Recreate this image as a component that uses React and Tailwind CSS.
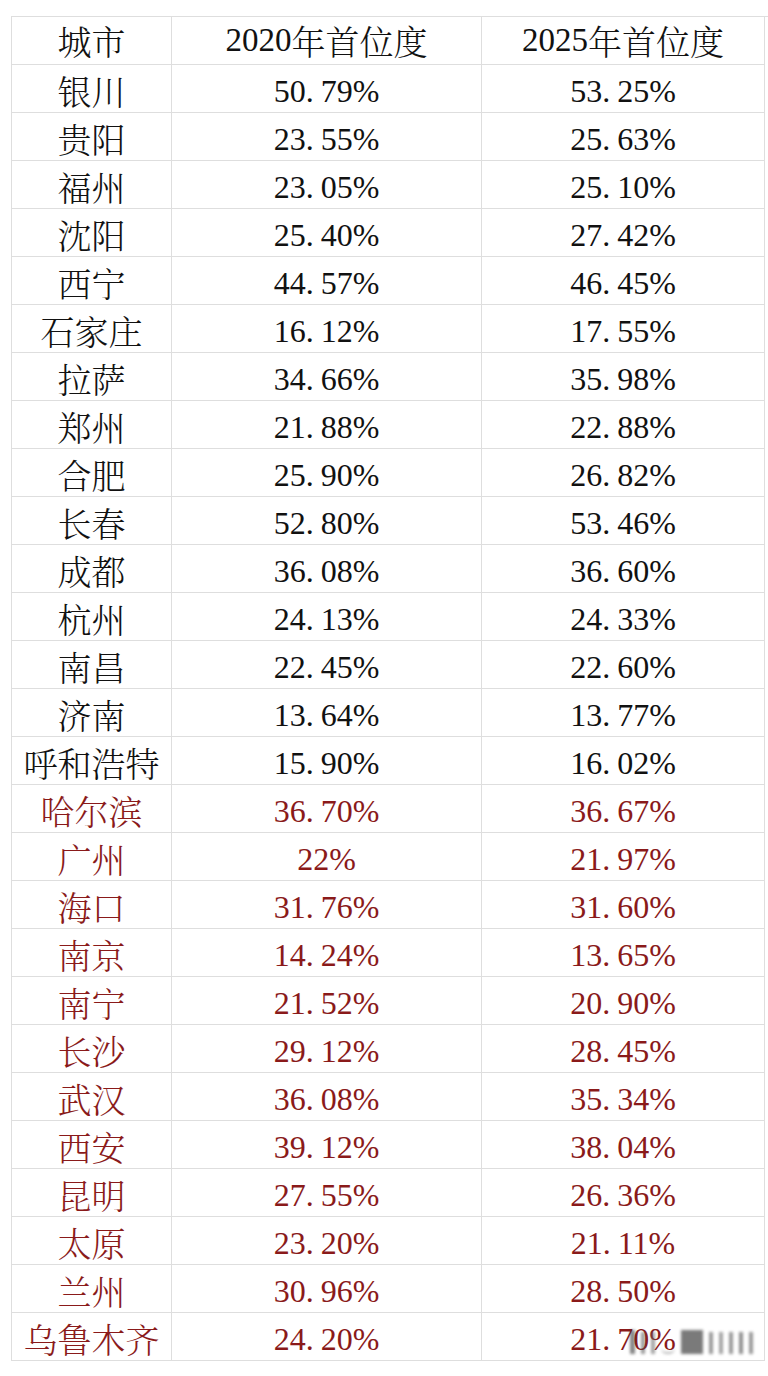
import React from "react";

const rows = [
  ["银川", "50.79%", "53.25%", 0],
  ["贵阳", "23.55%", "25.63%", 0],
  ["福州", "23.05%", "25.10%", 0],
  ["沈阳", "25.40%", "27.42%", 0],
  ["西宁", "44.57%", "46.45%", 0],
  ["石家庄", "16.12%", "17.55%", 0],
  ["拉萨", "34.66%", "35.98%", 0],
  ["郑州", "21.88%", "22.88%", 0],
  ["合肥", "25.90%", "26.82%", 0],
  ["长春", "52.80%", "53.46%", 0],
  ["成都", "36.08%", "36.60%", 0],
  ["杭州", "24.13%", "24.33%", 0],
  ["南昌", "22.45%", "22.60%", 0],
  ["济南", "13.64%", "13.77%", 0],
  ["呼和浩特", "15.90%", "16.02%", 0],
  ["哈尔滨", "36.70%", "36.67%", 1],
  ["广州", "22%", "21.97%", 1],
  ["海口", "31.76%", "31.60%", 1],
  ["南京", "14.24%", "13.65%", 1],
  ["南宁", "21.52%", "20.90%", 1],
  ["长沙", "29.12%", "28.45%", 1],
  ["武汉", "36.08%", "35.34%", 1],
  ["西安", "39.12%", "38.04%", 1],
  ["昆明", "27.55%", "26.36%", 1],
  ["太原", "23.20%", "21.11%", 1],
  ["兰州", "30.96%", "28.50%", 1],
  ["乌鲁木齐", "24.20%", "21.70%", 1],
];

function Num({ v }) {
  const i = v.indexOf(".");
  if (i < 0) return <span>{v}</span>;
  return (
    <span>
      {v.slice(0, i)}
      <span className="mr-[7px]">.</span>
      {v.slice(i + 1)}
    </span>
  );
}

const cell = "h-[48px] flex items-center justify-center border-r border-b border-[#dedede]";
const cjk = "font-['Noto_Serif_CJK_SC','Noto_Sans_CJK_SC',sans-serif] text-[34px] font-light";
const serif = "font-['Liberation_Serif','Times_New_Roman',serif] text-[32px]";

export default function App() {
  return (
    <div className="relative w-[768px] h-[1376px] bg-white pt-[16px] pl-[11px]">
      <div className="grid grid-cols-[160px_310px_283px] border-l border-t border-[#dedede]">
        <div className={`${cell} ${cjk} text-[#111]`}>城市</div>
        <div className={`${cell} text-[#111]`}>
          <span className={`${serif} text-[33px]`}>2020</span>
          <span className={cjk}>年首位度</span>
        </div>
        <div className={`${cell} text-[#111]`}>
          <span className={`${serif} text-[33px]`}>2025</span>
          <span className={cjk}>年首位度</span>
        </div>
        {rows.map(([c, a, b, red], idx) => {
          const color = red ? "text-[#8a1a1a]" : "text-[#111]";
          return (
            <React.Fragment key={idx}>
              <div className={`${cell} ${cjk} pt-[3px] ${color}`}>{c}</div>
              <div className={`${cell} ${serif} pt-[4px] ${color}`}><Num v={a} /></div>
              <div className={`${cell} ${serif} pt-[4px] ${color}`}><Num v={b} /></div>
            </React.Fragment>
          );
        })}
      </div>
      <div className="absolute left-[630px] top-[1330px] flex items-end gap-[6px] blur-[1.5px] opacity-60">
        <div className="w-[5px] h-[24px] bg-[#333]" />
        <div className="w-[4px] h-[22px] bg-[#555]" />
        <div className="w-[4px] h-[22px] bg-[#666]" />
        <div className="w-[14px] h-[6px] rounded-b-full border-b-2 border-[#888]" />
        <div className="w-[22px] h-[24px] bg-[#222]" />
        <div className="w-[4px] h-[22px] bg-[#555]" />
        <div className="w-[4px] h-[22px] bg-[#666]" />
        <div className="w-[4px] h-[22px] bg-[#555]" />
        <div className="w-[4px] h-[22px] bg-[#444]" />
        <div className="w-[4px] h-[22px] bg-[#555]" />
      </div>
    </div>
  );
}
